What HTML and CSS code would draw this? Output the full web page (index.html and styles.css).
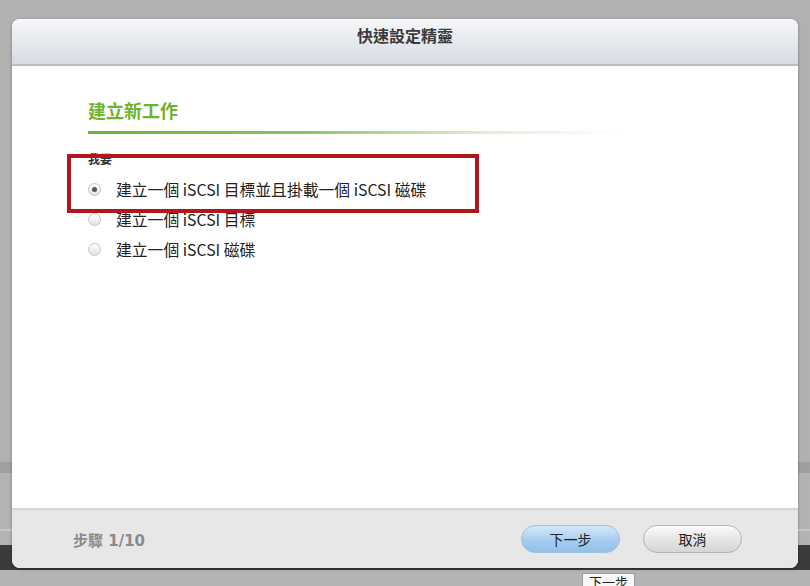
FILE: index.html
```html
<!DOCTYPE html>
<html lang="zh-Hant">
<head>
    <meta charset="UTF-8">
    <title>快速設定精靈</title>
    <link rel="stylesheet" href="styles.css">
</head>
<body>
    <div class="dialog">
        <div class="dialog-header">快速設定精靈</div>

        <div class="dialog-body">
            <h2 class="section-title">建立新工作</h2>
            <div class="section-line"></div>

            <p class="field-label">我要</p>
            <ul class="options">
                <li class="option">
                    <span class="radio checked"></span>
                    <span>建立一個 iSCSI 目標並且掛載一個 iSCSI 磁碟</span>
                </li>
                <li class="option">
                    <span class="radio"></span>
                    <span>建立一個 iSCSI 目標</span>
                </li>
                <li class="option">
                    <span class="radio"></span>
                    <span>建立一個 iSCSI 磁碟</span>
                </li>
            </ul>

            <!-- annotation drawn over the first choice -->
            <div class="highlight-box"></div>
        </div>

        <div class="dialog-footer">
            <span class="step">步驟 1/10</span>
            <div class="footer-buttons">
                <button class="pill-btn next-btn">下一步</button>
                <button class="pill-btn cancel-btn">取消</button>
            </div>
        </div>
    </div>

    <div class="tooltip">下一步</div>
</body>
</html>
```

FILE: styles.css
```css
* {
    margin: 0;
    padding: 0;
    box-sizing: border-box;
    font-family: "Noto Sans CJK TC", "Liberation Sans", sans-serif;
}

body {
    width: 810px;
    height: 586px;
    overflow: hidden;
    position: relative;
    /* window behind the dialog */
    background: linear-gradient(to bottom,
        #b1b1b1 0, #b1b1b1 462px,
        #9f9f9f 462px, #9f9f9f 473px,
        #b3b3b3 473px, #b3b3b3 529px,
        #c8c8c8 529px, #c8c8c8 531px,
        #b3b3b3 531px, #b3b3b3 545px,
        #3b3b3b 545px, #3b3b3b 570px,
        #b4b4b4 570px);
}

/* Dialog */
.dialog {
    position: relative;
    margin: 19px 12px 0;
    height: 549px;
    display: flex;
    flex-direction: column;
    background-color: white;
    border-radius: 8px;
    box-shadow: 0 1px 3px rgba(0, 0, 0, 0.35);
    overflow: hidden;
}

.dialog-header {
    height: 47px;
    padding-top: 4px;
    text-align: center;
    font-size: 16px;
    font-weight: bold;
    color: #3a3a3a;
    background: linear-gradient(to bottom, #f6f7f9, #d6dce3);
    border-bottom: 2px solid #b9bdc2;
}

.dialog-body {
    flex: 1;
    padding: 31px 0 0 76px;
    color: #222;
}

.section-title {
    font-size: 18px;
    font-weight: bold;
    color: #6fb22b;
    line-height: 26px;
}

.section-line {
    width: 530px;
    height: 3px;
    margin-top: 8px;
    background: linear-gradient(to right, #6db13a 0%, #8cc25e 40%, rgba(200, 228, 180, 0.6) 75%, rgba(255, 255, 255, 0) 100%);
}

.field-label {
    margin-top: 18px;
    font-size: 12px;
    font-weight: bold;
    color: #333;
    line-height: 14px;
}

.options {
    list-style: none;
    margin-top: 8px;
}

.option {
    display: flex;
    align-items: center;
    gap: 15px;
    height: 30px;
    font-size: 15.8px;
    color: #222;
}

.radio {
    width: 13px;
    height: 13px;
    border-radius: 50%;
    border: 1px solid #c4c4c4;
    background: linear-gradient(to bottom, #ffffff, #e2e2e2);
    display: flex;
    align-items: center;
    justify-content: center;
}

.radio.checked::after {
    content: "";
    width: 5px;
    height: 5px;
    border-radius: 50%;
    background-color: #555;
}

.highlight-box {
    position: absolute;
    left: 55px;
    top: 135px;
    width: 412px;
    height: 59px;
    border: 4px solid #b1161c;
}

/* Footer */
.dialog-footer {
    height: 60px;
    display: flex;
    justify-content: space-between;
    align-items: center;
    padding: 0 56px 0 61px;
    background-color: #e7e7e7;
    border-top: 2px solid #d6d6d6;
}

.step {
    font-family: "DejaVu Sans", "Noto Sans CJK TC", sans-serif;
    font-size: 15px;
    font-weight: bold;
    color: #8a8a8a;
}

.footer-buttons {
    display: flex;
    gap: 23px;
}

.pill-btn {
    width: 99px;
    height: 28px;
    border-radius: 14px;
    font-size: 14px;
    color: #222;
    cursor: pointer;
}

.next-btn {
    border: 1px solid #9cc2e3;
    background: linear-gradient(to bottom, #d4e8f9, #a6cdef 55%, #93c0e8);
}

.cancel-btn {
    border: 1px solid #b4b4b4;
    background: linear-gradient(to bottom, #fbfbfb, #e4e4e4 55%, #d6d6d6);
}

.tooltip {
    position: absolute;
    left: 582px;
    top: 573px;
    padding: 0 6px;
    font-size: 13px;
    line-height: 16px;
    color: #222;
    background-color: #f7f7f7;
    border: 1px solid #9a9a9a;
}
```
